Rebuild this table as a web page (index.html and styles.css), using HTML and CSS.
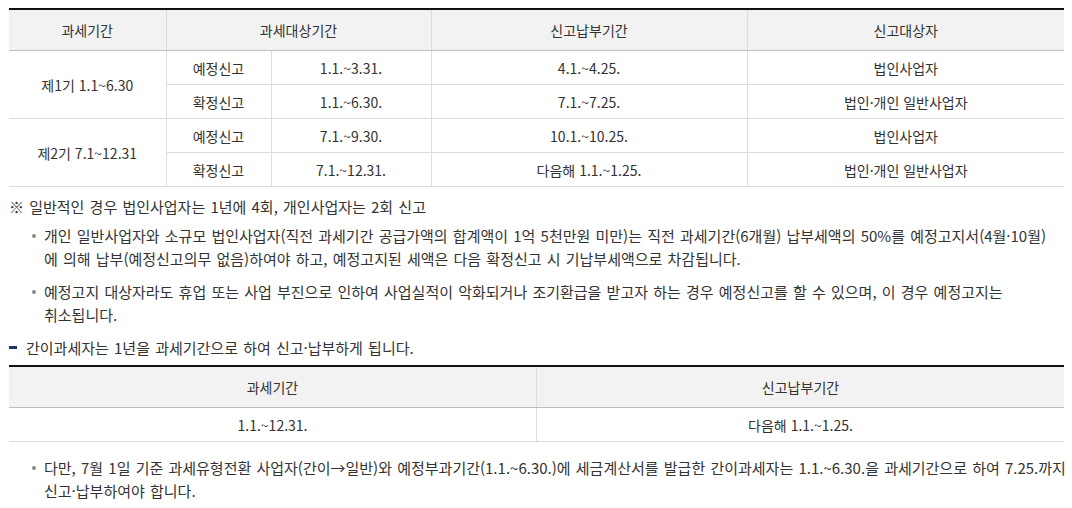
FILE: index.html
```html
<!DOCTYPE html>
<html lang="ko">
<head>
<meta charset="utf-8">
<link rel="stylesheet" href="styles.css">
</head>
<body>
<div class="page">
  <table class="tbl tbl-main">
    <colgroup>
      <col class="c1"><col class="c2"><col class="c3"><col class="c4"><col class="c5">
    </colgroup>
    <thead>
      <tr><th>과세기간</th><th colspan="2">과세대상기간</th><th>신고납부기간</th><th>신고대상자</th></tr>
    </thead>
    <tbody>
      <tr><td rowspan="2">제1기 1.1~6.30</td><td>예정신고</td><td>1.1.~3.31.</td><td>4.1.~4.25.</td><td>법인사업자</td></tr>
      <tr><td>확정신고</td><td>1.1.~6.30.</td><td>7.1.~7.25.</td><td>법인·개인 일반사업자</td></tr>
      <tr><td rowspan="2">제2기 7.1~12.31</td><td>예정신고</td><td>7.1.~9.30.</td><td>10.1.~10.25.</td><td>법인사업자</td></tr>
      <tr><td>확정신고</td><td>7.1.~12.31.</td><td>다음해 1.1.~1.25.</td><td>법인·개인 일반사업자</td></tr>
    </tbody>
  </table>

  <p class="note">※ 일반적인 경우 법인사업자는 1년에 4회, 개인사업자는 2회 신고</p>
  <ul class="bullets">
    <li>개인 일반사업자와 소규모 법인사업자(직전 과세기간 공급가액의 합계액이 1억 5천만원 미만)는 직전 과세기간(6개월) 납부세액의 50%를 예정고지서(4월·10월)<br>에 의해 납부(예정신고의무 없음)하여야 하고, 예정고지된 세액은 다음 확정신고 시 기납부세액으로 차감됩니다.</li>
    <li>예정고지 대상자라도 휴업 또는 사업 부진으로 인하여 사업실적이 악화되거나 조기환급을 받고자 하는 경우 예정신고를 할 수 있으며, 이 경우 예정고지는<br>취소됩니다.</li>
  </ul>

  <p class="dash">간이과세자는 1년을 과세기간으로 하여 신고·납부하게 됩니다.</p>

  <table class="tbl tbl-sub">
    <thead>
      <tr><th>과세기간</th><th>신고납부기간</th></tr>
    </thead>
    <tbody>
      <tr><td>1.1.~12.31.</td><td>다음해 1.1.~1.25.</td></tr>
    </tbody>
  </table>

  <ul class="bullets bullets-last">
    <li>다만, 7월 1일 기준 과세유형전환 사업자(간이→일반)와 예정부과기간(1.1.~6.30.)에 세금계산서를 발급한 간이과세자는 1.1.~6.30.을 과세기간으로 하여 7.25.까지<br>신고·납부하여야 합니다.</li>
  </ul>
</div>
</body>
</html>
```
FILE: styles.css
```css
html, body {
  margin: 0;
  padding: 0;
  background: #fff;
}
body {
  font-family: "Noto Sans CJK KR", "Noto Sans", sans-serif;
  color: #333;
}
.page {
  padding: 8px 8px 0 9px;
}
.tbl {
  width: 1055px;
  border-collapse: collapse;
  table-layout: fixed;
  border-top: 2px solid #111;
  font-size: 14px;
  color: #333;
}
.tbl th {
  background: #f2f2f2;
  font-weight: normal;
  height: 40px;
  padding: 0;
  border-bottom: 1px solid #bdbdbd;
  border-left: 1px solid #dcdcdc;
  text-align: center;
}
.tbl td {
  height: 33px;
  padding: 0;
  border-bottom: 1px solid #dcdcdc;
  border-left: 1px solid #dcdcdc;
  text-align: center;
}
.tbl th:first-child, .tbl tr > td:first-child {
  border-left: none;
}
.tbl-main tbody tr:nth-child(2n) td:first-child {
  border-left: 1px solid #dcdcdc;
}
.c1 { width: 157px; }
.c2 { width: 105px; }
.c3 { width: 160px; }
.c4 { width: 316px; }
.c5 { width: 317px; }

.note, .bullets, .dash {
  font-size: 15px;
  line-height: 23px;
  color: #333;
  word-spacing: 1px;
}
.note {
  margin: 8px 0 0 0;
}
.bullets {
  list-style: none;
  margin: 6px -8px 0 0;
  padding: 0 0 0 35px;
}
.bullets li {
  position: relative;
  margin-bottom: 10px;
}
.bullets li::before {
  content: "";
  position: absolute;
  left: -12px;
  top: 10px;
  width: 4px;
  height: 4px;
  border-radius: 50%;
  background: #8a8a8a;
}
.dash {
  margin: 0;
  padding-left: 17px;
  position: relative;
}
.dash::before {
  content: "";
  position: absolute;
  left: 0;
  top: 10px;
  width: 8px;
  height: 3px;
  background: #1a3a6b;
}
.tbl-sub {
  margin-top: 6px;
}
.bullets-last {
  margin-top: 14px;
}
```
